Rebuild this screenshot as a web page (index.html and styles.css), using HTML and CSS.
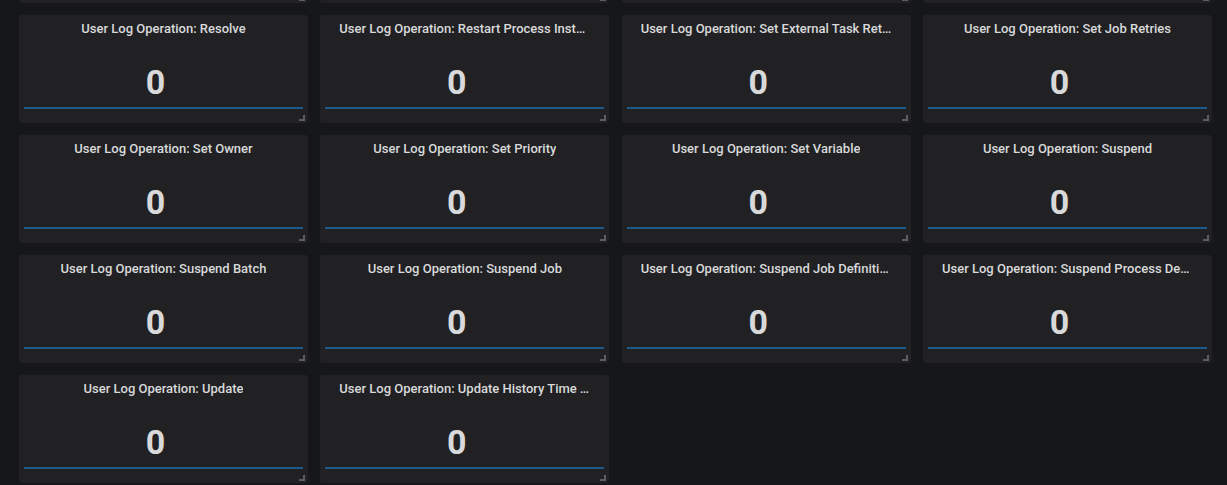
FILE: index.html
```html
<!DOCTYPE html>
<html lang="en">
<head>
<meta charset="utf-8">
<title>Dashboard</title>
<link rel="stylesheet" href="styles.css">
</head>
<body>
<div class="dashboard">
  <div class="panel"><span class="resize"></span></div>
  <div class="panel"><span class="resize"></span></div>
  <div class="panel"><span class="resize"></span></div>
  <div class="panel"><span class="resize"></span></div>

  <div class="panel"><div class="panel-header"><span class="panel-title">User Log Operation: Resolve</span></div><div class="panel-body"><div class="value">0</div><div class="sparkline"></div></div><span class="resize"></span></div>
  <div class="panel"><div class="panel-header"><span class="panel-title">User Log Operation: Restart Process Instance</span></div><div class="panel-body"><div class="value">0</div><div class="sparkline"></div></div><span class="resize"></span></div>
  <div class="panel"><div class="panel-header"><span class="panel-title">User Log Operation: Set External Task Retries</span></div><div class="panel-body"><div class="value">0</div><div class="sparkline"></div></div><span class="resize"></span></div>
  <div class="panel"><div class="panel-header"><span class="panel-title">User Log Operation: Set Job Retries</span></div><div class="panel-body"><div class="value">0</div><div class="sparkline"></div></div><span class="resize"></span></div>

  <div class="panel"><div class="panel-header"><span class="panel-title">User Log Operation: Set Owner</span></div><div class="panel-body"><div class="value">0</div><div class="sparkline"></div></div><span class="resize"></span></div>
  <div class="panel"><div class="panel-header"><span class="panel-title">User Log Operation: Set Priority</span></div><div class="panel-body"><div class="value">0</div><div class="sparkline"></div></div><span class="resize"></span></div>
  <div class="panel"><div class="panel-header"><span class="panel-title">User Log Operation: Set Variable</span></div><div class="panel-body"><div class="value">0</div><div class="sparkline"></div></div><span class="resize"></span></div>
  <div class="panel"><div class="panel-header"><span class="panel-title">User Log Operation: Suspend</span></div><div class="panel-body"><div class="value">0</div><div class="sparkline"></div></div><span class="resize"></span></div>

  <div class="panel"><div class="panel-header"><span class="panel-title">User Log Operation: Suspend Batch</span></div><div class="panel-body"><div class="value">0</div><div class="sparkline"></div></div><span class="resize"></span></div>
  <div class="panel"><div class="panel-header"><span class="panel-title">User Log Operation: Suspend Job</span></div><div class="panel-body"><div class="value">0</div><div class="sparkline"></div></div><span class="resize"></span></div>
  <div class="panel"><div class="panel-header"><span class="panel-title">User Log Operation: Suspend Job Definition</span></div><div class="panel-body"><div class="value">0</div><div class="sparkline"></div></div><span class="resize"></span></div>
  <div class="panel"><div class="panel-header"><span class="panel-title">User Log Operation: Suspend Process Definition</span></div><div class="panel-body"><div class="value">0</div><div class="sparkline"></div></div><span class="resize"></span></div>

  <div class="panel"><div class="panel-header"><span class="panel-title">User Log Operation: Update</span></div><div class="panel-body"><div class="value">0</div><div class="sparkline"></div></div><span class="resize"></span></div>
  <div class="panel"><div class="panel-header"><span class="panel-title">User Log Operation: Update History Time To Live</span></div><div class="panel-body"><div class="value">0</div><div class="sparkline"></div></div><span class="resize"></span></div>
</div>
</body>
</html>
```

FILE: styles.css
```css
html, body {
  margin: 0;
  padding: 0;
  background: #161719;
  height: 100%;
  overflow: hidden;
}

body {
  font-family: Roboto, "Liberation Sans", sans-serif;
  color: #d8d9da;
}

.dashboard {
  display: grid;
  grid-template-columns: repeat(4, 289px);
  grid-auto-rows: 108px;
  column-gap: 12.33px;
  row-gap: 12px;
  padding-left: 19px;
  margin-top: -105px;
}

.panel {
  position: relative;
  background: #212124;
  border-radius: 3px;
  display: flex;
  flex-direction: column;
}

.panel-header {
  height: 26px;
  line-height: 27px;
  text-align: center;
}

.panel-title {
  display: inline-block;
  max-width: calc(100% - 38px);
  font-size: 13px;
  font-weight: 500;
  white-space: nowrap;
  overflow: hidden;
  text-overflow: ellipsis;
  vertical-align: top;
}

.panel-body {
  flex: 1;
  display: flex;
  flex-direction: column;
  padding: 0 5px 14px;
}

.value {
  margin-top: 24px;
  padding-right: 16px;
  height: 34px;
  font-size: 34px;
  line-height: 34px;
  font-weight: 700;
  text-align: center;
}

.sparkline {
  margin-top: 8px;
  height: 2px;
  background: #1e5b8c;
}

.resize {
  position: absolute;
  right: 3px;
  bottom: 2px;
  width: 4px;
  height: 4px;
  border-right: 2px solid #5e5e60;
  border-bottom: 2px solid #5e5e60;
}
```
